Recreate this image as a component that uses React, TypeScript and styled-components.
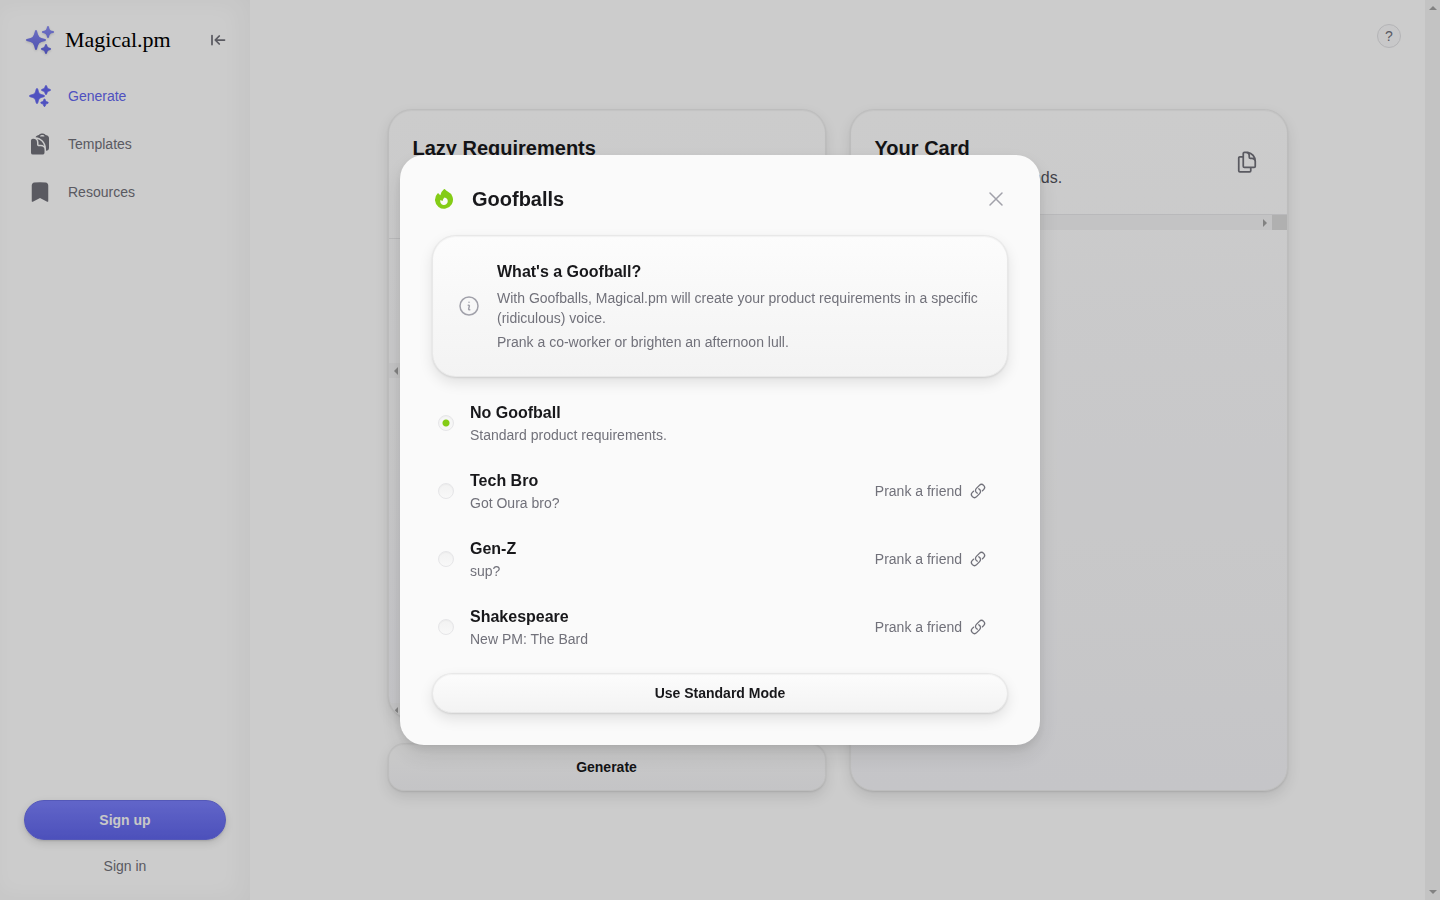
import React, { useState } from "react";
import styled, { createGlobalStyle, css } from "styled-components";
import {
  HiBookmark,
  HiClipboardDocument,
  HiFire,
  HiOutlineDocumentDuplicate,
  HiOutlineInformationCircle,
  HiOutlineLink,
  HiOutlineXMark,
  HiSparkles,
} from "react-icons/hi2";

const GlobalStyle = createGlobalStyle`
  *, *::before, *::after { box-sizing: border-box; }
  body {
    margin: 0;
    background: #ffffff;
    color: #18181b;
    font-family: "Liberation Sans", Arial, sans-serif;
    font-size: 14px;
    line-height: 20px;
  }
  h1, h2, h3, p { margin: 0; }
  button, input, textarea { font: inherit; color: inherit; }
  button { cursor: pointer; }
`;

const raised = css`
  border: 1px solid rgba(0, 0, 0, 0.07);
  background: linear-gradient(#fcfcfc, #f3f3f3) padding-box;
  box-shadow: inset 0 1px 1px rgba(0, 0, 0, 0.04), 0 1px 2px rgba(0, 0, 0, 0.1),
    0 6px 14px rgba(0, 0, 0, 0.1);
`;

const Page = styled.div`
  display: flex;
  min-height: 100vh;
`;

const Sidebar = styled.aside`
  display: flex;
  flex-direction: column;
  flex: none;
  width: 250px;
  padding: 24px;
  box-shadow: inset -8px 0 24px rgba(0, 0, 0, 0.04);
`;

const Brand = styled.div`
  display: flex;
  align-items: center;
  gap: 9px;
  height: 32px;
  margin-bottom: 16px;
`;

const LogoMark = styled.span`
  display: flex;
  filter: drop-shadow(0 1px 1px rgba(0, 0, 0, 0.15));
  path {
    fill: url(#logo-fill);
  }
`;

const Wordmark = styled.h1`
  flex: 1;
  color: #000000;
  font-family: "Liberation Serif", "Times New Roman", serif;
  font-size: 22px;
  font-weight: 400;
  line-height: 32px;
`;

const CollapseButton = styled.button`
  display: flex;
  padding: 0;
  border: 0;
  background: none;
  color: #71717a;
`;

const Nav = styled.nav`
  display: flex;
  flex-direction: column;
`;

const NavItem = styled.a<{ $active?: boolean }>`
  display: flex;
  align-items: center;
  gap: 16px;
  height: 48px;
  padding: 0 4px;
  color: ${(p) => (p.$active ? "#6366f1" : "#71717a")};
  text-decoration: none;
`;

const Account = styled.div`
  display: flex;
  flex-direction: column;
  gap: 16px;
  margin-top: auto;
`;

const SignUp = styled.button`
  height: 40px;
  border: 1px solid #6a6ee6;
  border-radius: 20px;
  background: linear-gradient(#7a7ffc, #6065ea);
  box-shadow: 0 1px 2px rgba(0, 0, 0, 0.12), 0 3px 8px rgba(0, 0, 0, 0.12);
  color: #fafafa;
  font-weight: 700;
`;

const SignIn = styled.a`
  color: #71717a;
  text-align: center;
  text-decoration: none;
`;

const Main = styled.main`
  position: relative;
  display: flex;
  flex: 1;
  align-items: center;
  justify-content: center;
  min-width: 0;
  padding: 72px 24px;
`;

const HelpButton = styled.button`
  position: absolute;
  top: 24px;
  right: 24px;
  width: 24px;
  height: 24px;
  padding: 0;
  border: 1px solid #e2e2e4;
  border-radius: 12px;
  background: #fafafc;
  color: #71717a;
  line-height: 20px;
`;

const Columns = styled.div`
  display: grid;
  grid-template-columns: 1fr 1fr;
  gap: 24px;
  width: 100%;
  max-width: 900px;
  min-height: 682px;
`;

const Column = styled.div`
  display: flex;
  flex-direction: column;
  gap: 24px;
  min-width: 0;
`;

const Card = styled.section`
  ${raised}
  display: flex;
  flex: 1;
  flex-direction: column;
  overflow: hidden;
  border-radius: 24px;
  background: linear-gradient(#ffffff, #f7f7fa) padding-box;
`;

const CardHeader = styled.header`
  display: flex;
  align-items: center;
  justify-content: space-between;
  gap: 24px;
  padding: 24px;
`;

const CardTitle = styled.h2`
  margin-bottom: 4px;
  font-size: 20px;
  line-height: 28px;
`;

const CardText = styled.p`
  color: #52525b;
  font-size: 16px;
  line-height: 24px;
`;

const CopyButton = styled.button`
  display: flex;
  padding: 0;
  margin-right: 4px;
  border: 0;
  background: none;
  color: #71717a;
`;

const Field = styled.div<{ $grow?: boolean; $line?: boolean }>`
  display: flex;
  flex-direction: column;
  flex: ${(p) => (p.$grow ? "1" : "0 0 140px")};
  border-top: ${(p) => (p.$line ? "1px solid #e8e8ea" : "0")};
`;

const FieldInput = styled.textarea`
  flex: 1;
  min-height: 0;
  padding: 24px;
  border: 0;
  outline: 0;
  resize: none;
  background: transparent;
`;

const ScrollTrack = styled.div`
  display: flex;
  align-items: center;
  justify-content: space-between;
  height: 15px;
  padding: 0 3px;
  background: #f4f4f5;
`;

const ScrollRow = styled.div`
  display: flex;
  border-top: 1px solid #e8e8ea;
  ${ScrollTrack} {
    flex: 1;
  }
`;

const ScrollCorner = styled.div`
  width: 15px;
  height: 15px;
  background: #dcdcdc;
`;

const PageScroll = styled.div`
  display: flex;
  flex: none;
  flex-direction: column;
  align-items: center;
  justify-content: space-between;
  width: 15px;
  padding: 4px 0;
  background: #f4f4f4;
`;

const GenerateButton = styled.button`
  ${raised}
  height: 48px;
  border-radius: 16px;
  background: linear-gradient(#fcfcfc, #f6f6f8) padding-box;
  font-weight: 700;
`;

const Backdrop = styled.div`
  position: fixed;
  inset: 0;
  display: flex;
  align-items: center;
  justify-content: center;
  background: rgba(0, 0, 0, 0.2);
`;

const Modal = styled.div`
  display: flex;
  flex-direction: column;
  gap: 24px;
  width: 100%;
  max-width: 640px;
  padding: 32px;
  border-radius: 24px;
  background: #fafafa;
  box-shadow: 0 4px 8px rgba(0, 0, 0, 0.08), 0 10px 24px rgba(0, 0, 0, 0.1);
`;

const ModalHeader = styled.header`
  display: flex;
  align-items: center;
  gap: 16px;
  height: 24px;
  color: #84cc16;
`;

const ModalTitle = styled.h2`
  flex: 1;
  color: #18181b;
  font-size: 20px;
  line-height: 24px;
`;

const CloseButton = styled.button`
  display: flex;
  padding: 0;
  border: 0;
  background: none;
  color: #a1a1aa;
`;

const Notice = styled.section`
  ${raised}
  display: flex;
  align-items: center;
  gap: 16px;
  padding: 24px;
  border-radius: 24px;
  color: #a1a1aa;
  svg {
    flex: none;
  }
`;

const NoticeBody = styled.div`
  display: flex;
  flex-direction: column;
  gap: 4px;
  color: #71717a;
`;

const NoticeTitle = styled.h3`
  color: #18181b;
  font-size: 16px;
  line-height: 24px;
`;

const Options = styled.div`
  display: flex;
  flex-direction: column;
  gap: 24px;
`;

const Option = styled.div`
  display: flex;
  align-items: center;
  justify-content: space-between;
  padding: 0 22px 0 6px;
`;

const OptionLabel = styled.label`
  display: flex;
  align-items: center;
  gap: 16px;
  cursor: pointer;
`;

const Radio = styled.input`
  appearance: none;
  width: 16px;
  height: 16px;
  margin: 0;
  border: 1px solid #e6e6e8;
  border-radius: 50%;
  background: linear-gradient(#f2f2f2, #f8f8f8);
  box-shadow: inset 0 1px 1px rgba(0, 0, 0, 0.03);
  &:checked {
    background: radial-gradient(circle, #84cc16 3px, #f6f6f6 4px);
  }
`;

const OptionText = styled.span`
  display: flex;
  flex-direction: column;
  color: #71717a;
`;

const OptionName = styled.span`
  color: #18181b;
  font-size: 16px;
  font-weight: 700;
  line-height: 24px;
`;

const PrankLink = styled.a`
  display: flex;
  align-items: center;
  gap: 8px;
  color: #71717a;
  text-decoration: none;
`;

const ConfirmButton = styled.button`
  ${raised}
  height: 40px;
  border-radius: 20px;
  font-weight: 700;
`;

const arrows = {
  up: "M0 6L4 2l4 4z",
  down: "M0 2l4 4 4-4z",
  left: "M6 0L2 4l4 4z",
  right: "M2 0l4 4-4 4z",
};

function Arrow({ to }: { to: keyof typeof arrows }) {
  return (
    <svg width="8" height="8" viewBox="0 0 8 8" fill="#a3a3a3" aria-hidden="true">
      <path d={arrows[to]} />
    </svg>
  );
}

function Logo() {
  return (
    <LogoMark aria-hidden="true">
      <svg width="0" height="0">
        <defs>
          <linearGradient id="logo-fill" x1="0" y1="0" x2="0" y2="1">
            <stop offset="0" stopColor="#8b8ff5" />
            <stop offset="1" stopColor="#5f62dc" />
          </linearGradient>
        </defs>
      </svg>
      <HiSparkles size={32} />
    </LogoMark>
  );
}

const goofballs = [
  { id: "none", name: "No Goofball", text: "Standard product requirements.", action: "Use Standard Mode" },
  { id: "tech-bro", name: "Tech Bro", text: "Got Oura bro?", action: "Use Tech Bro Mode" },
  { id: "gen-z", name: "Gen-Z", text: "sup?", action: "Use Gen-Z Mode" },
  { id: "shakespeare", name: "Shakespeare", text: "New PM: The Bard", action: "Use Shakespeare Mode" },
];

export default function App() {
  const [open, setOpen] = useState(true);
  const [chosen, setChosen] = useState("none");
  const current = goofballs.find((g) => g.id === chosen)!;

  return (
    <>
      <GlobalStyle />
      <Page>
        <Sidebar>
          <Brand>
            <Logo />
            <Wordmark>Magical.pm</Wordmark>
            <CollapseButton aria-label="Collapse sidebar">
              <svg width="16" height="16" viewBox="0 0 16 16" fill="none" stroke="currentColor" strokeWidth="1.75" strokeLinecap="round" strokeLinejoin="round">
                <path d="M2 3.5v9M14.5 8H5.5M9.25 4L5.25 8l4 4" />
              </svg>
            </CollapseButton>
          </Brand>
          <Nav>
            <NavItem href="#generate" $active>
              <HiSparkles size={24} stroke="currentColor" strokeWidth={0.75} />
              Generate
            </NavItem>
            <NavItem href="#templates">
              <HiClipboardDocument size={24} />
              Templates
            </NavItem>
            <NavItem href="#resources">
              <HiBookmark size={24} />
              Resources
            </NavItem>
          </Nav>
          <Account>
            <SignUp>Sign up</SignUp>
            <SignIn href="#sign-in">Sign in</SignIn>
          </Account>
        </Sidebar>

        <Main>
          <HelpButton aria-label="Help">?</HelpButton>
          <Columns>
            <Column>
              <Card>
                <CardHeader>
                  <div>
                    <CardTitle>Lazy Requirements</CardTitle>
                    <CardText>
                      Describe the feature in a few words and let Magical.pm fill in the details.
                    </CardText>
                  </div>
                </CardHeader>
                <Field $line>
                  <FieldInput aria-label="Summary" />
                  <ScrollTrack>
                    <Arrow to="left" />
                    <Arrow to="right" />
                  </ScrollTrack>
                </Field>
                <Field $grow>
                  <FieldInput aria-label="Requirements" />
                  <ScrollTrack>
                    <Arrow to="left" />
                    <Arrow to="right" />
                  </ScrollTrack>
                </Field>
              </Card>
              <GenerateButton>Generate</GenerateButton>
            </Column>
            <Card>
              <CardHeader>
                <div>
                  <CardTitle>Your Card</CardTitle>
                  <CardText>Ready to copy in seconds.</CardText>
                </div>
                <CopyButton aria-label="Copy card">
                  <HiOutlineDocumentDuplicate size={24} strokeWidth={1.75} />
                </CopyButton>
              </CardHeader>
              <ScrollRow>
                <ScrollTrack>
                  <Arrow to="left" />
                  <Arrow to="right" />
                </ScrollTrack>
                <ScrollCorner />
              </ScrollRow>
            </Card>
          </Columns>
        </Main>

        <PageScroll>
          <Arrow to="up" />
          <Arrow to="down" />
        </PageScroll>
      </Page>

      {open && (
        <Backdrop>
          <Modal role="dialog" aria-modal="true" aria-labelledby="goofballs-title">
            <ModalHeader>
              <HiFire size={24} />
              <ModalTitle id="goofballs-title">Goofballs</ModalTitle>
              <CloseButton aria-label="Close" onClick={() => setOpen(false)}>
                <HiOutlineXMark size={24} />
              </CloseButton>
            </ModalHeader>
            <Notice>
              <HiOutlineInformationCircle size={24} />
              <NoticeBody>
                <NoticeTitle>What's a Goofball?</NoticeTitle>
                <p>
                  With Goofballs, Magical.pm will create your product requirements in a specific
                  (ridiculous) voice.
                </p>
                <p>Prank a co-worker or brighten an afternoon lull.</p>
              </NoticeBody>
            </Notice>
            <Options role="radiogroup" aria-labelledby="goofballs-title">
              {goofballs.map((g) => (
                <Option key={g.id}>
                  <OptionLabel htmlFor={g.id}>
                    <Radio
                      type="radio"
                      name="goofball"
                      id={g.id}
                      checked={chosen === g.id}
                      onChange={() => setChosen(g.id)}
                    />
                    <OptionText>
                      <OptionName>{g.name}</OptionName>
                      {g.text}
                    </OptionText>
                  </OptionLabel>
                  {g.id !== "none" && (
                    <PrankLink href={"#" + g.id}>
                      Prank a friend
                      <HiOutlineLink size={16} strokeWidth={2} />
                    </PrankLink>
                  )}
                </Option>
              ))}
            </Options>
            <ConfirmButton onClick={() => setOpen(false)}>{current.action}</ConfirmButton>
          </Modal>
        </Backdrop>
      )}
    </>
  );
}
